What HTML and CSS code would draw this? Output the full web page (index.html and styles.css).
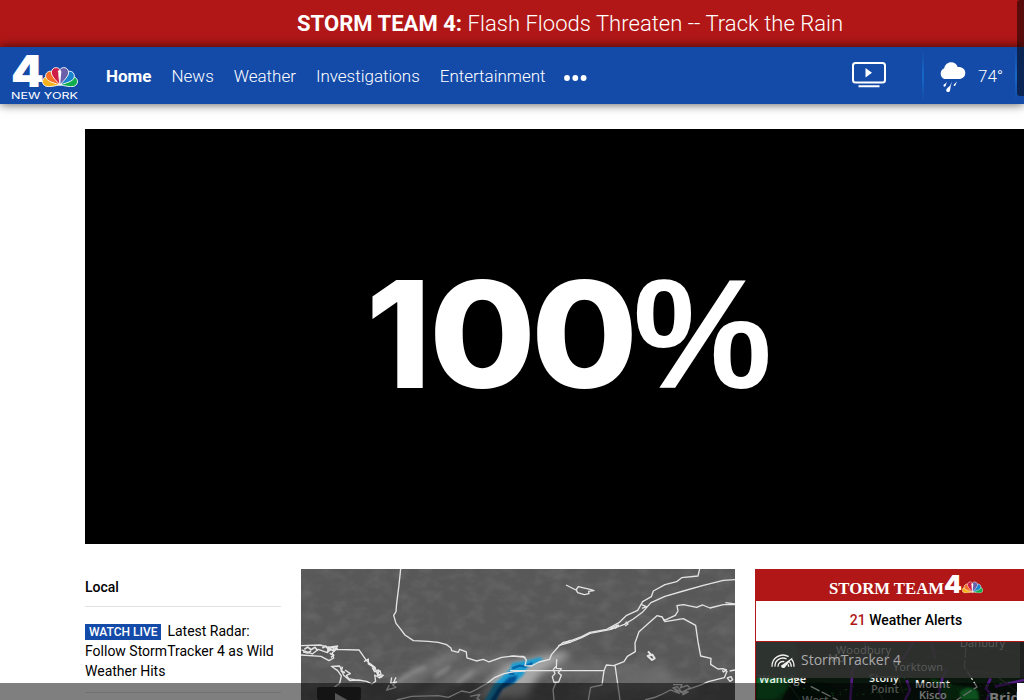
FILE: index.html
```html
<!DOCTYPE html>
<html lang="en">
<head>
<meta charset="utf-8">
<title>NBC New York</title>
<link rel="stylesheet" href="styles.css">
</head>
<body>
<svg class="defs" width="0" height="0" aria-hidden="true">
  <defs>
    <path id="feather" d="M0 0C-1.500-4-4.900-9-4.900-13C-4.700-16-2.400-18-.2-18C2.500-18 4.700-16 4.900-13C4.900-9 1.500-4 0 0Z"/>
    <symbol id="peacock" viewBox="0 0 36 21">
      <g transform="translate(18 19)" stroke="#fff" stroke-width=".8">
        <use href="#feather" fill="#f5b21b" transform="rotate(-75)"/>
        <use href="#feather" fill="#0fae4b" transform="rotate(75)"/>
        <use href="#feather" fill="#f36f25" transform="rotate(-47)"/>
        <use href="#feather" fill="#1983cc" transform="rotate(47)"/>
        <use href="#feather" fill="#ce1d46" transform="rotate(-17)"/>
        <use href="#feather" fill="#6c60aa" transform="rotate(17)"/>
        <path d="M0 1L-1.200-12L-2.400-14L0-15.300L1.400-13.500L1.200-12Z" fill="#fff" stroke="none"/>
      </g>
    </symbol>
  </defs>
</svg>
<a class="breaking"><b>STORM TEAM 4:</b> Flash Floods Threaten -- Track the Rain</a>
<header class="nav">
  <svg class="logo" width="68" height="46" viewBox="0 0 68 46">
    <text x="0" y="33" class="logo-four" textLength="33" lengthAdjust="spacingAndGlyphs">4</text>
    <use href="#peacock" x="31" y="12" width="36" height="21"/>
    <text x="0" y="45" class="logo-city" textLength="67" lengthAdjust="spacingAndGlyphs">NEW YORK</text>
  </svg>
  <nav class="links">
    <a class="active">Home</a><a>News</a><a>Weather</a><a>Investigations</a><a>Entertainment</a>
    <svg class="more" width="23" height="6" viewBox="0 0 23 6" fill="#fff"><circle cx="3" cy="3" r="2.900"/><circle cx="11.300" cy="3" r="2.900"/><circle cx="19.600" cy="3" r="2.900"/></svg>
  </nav>
  <svg class="tv" width="34" height="26" viewBox="0 0 34 26">
    <rect x="1" y="1" width="32" height="19.600" rx="2.500" fill="none" stroke="#fff" stroke-width="2"/>
    <path d="M13.500 6v9.600l6.500-4.800zM6.500 23.200h21v2h-21z" fill="#fff"/>
  </svg>
  <div class="weather">
    <svg width="28" height="31" viewBox="0 0 28 31" fill="#fff">
      <path d="M6.500 17A5.800 5.800 0 0 1 6.200 6.200C7 2.500 9.800.3 13.200.3c3 0 5.500 1.800 6.500 4.800C24.300 4.800 27.300 7.300 27.300 11c0 3.600-2.800 6-6.400 6z"/>
      <path d="M9 19.500C8 22 5.200 22 5.500 24c.3 1.200 2 1 2.200-.4zM14 19.500l-2 4.200c-2.600 2.300-4.300 3.300-3.700 5.200.6 1.600 3.500 1.600 3.800-.7l.6-4zM19 19.500l-2.800 2.800c-1.600 1.800 1 2.500 1.300.7z"/>
    </svg>
    <span>74°</span>
  </div>
</header>
<section class="hero">
  <svg width="939" height="415" viewBox="0 0 939 415">
    <g class="hero-num">
      <text x="281" y="259" textLength="65" lengthAdjust="spacingAndGlyphs">1</text>
      <text x="344" y="259" textLength="107" lengthAdjust="spacingAndGlyphs">0</text>
      <text x="446" y="259" textLength="107" lengthAdjust="spacingAndGlyphs">0</text>
      <text x="548" y="259" class="percent" textLength="139" lengthAdjust="spacingAndGlyphs">%</text>
    </g>
  </svg>
</section>
<main class="columns">
  <section class="local">
    <h2>Local</h2>
    <p><b class="tag">WATCH LIVE</b>Latest Radar: Follow StormTracker 4 as Wild Weather Hits</p>
  </section>
  <section class="satellite">
    <svg width="434" height="131" viewBox="0 0 434 131">
      <defs>
        <filter id="soft" x="-30%" y="-30%" width="160%" height="160%"><feGaussianBlur stdDeviation="12"/></filter>
        <filter id="softer" x="-30%" y="-60%" width="160%" height="220%"><feGaussianBlur stdDeviation="16"/></filter>
        <filter id="edge"><feGaussianBlur stdDeviation="3"/></filter>
        <filter id="haze" x="-20%" y="-20%" width="140%" height="140%"><feGaussianBlur stdDeviation="6"/></filter>
        <filter id="grain" x="0" y="0" width="100%" height="100%">
          <feTurbulence type="fractalNoise" baseFrequency=".06 .09" numOctaves="5" seed="4"/>
          <feColorMatrix values="0 0 0 0 .48  0 0 0 0 .48  0 0 0 0 .48  0 1.600 0 0 -.65"/>
        </filter>
      </defs>
      <rect width="434" height="131" fill="#585858"/>
      <rect width="434" height="131" filter="url(#grain)" opacity=".17"/>
      <g transform="translate(-6 -9) scale(.3333)" fill="none">
        <g filter="url(#softer)">
          <path d="M300 390Q410 310 500 275M360 430Q520 330 640 290" stroke="#858585" stroke-width="20"/>
          <path d="M720 330Q900 320 1130 345M850 400Q1000 360 1200 380" stroke="#787878" stroke-width="20"/>
        </g>
        <path d="M305 370Q345 335 392 322M420 350l45-30M485 370l50-35" stroke="#999" stroke-width="8" filter="url(#haze)"/>
        <path d="M540 420Q600 330 650 305L800 275L830 285L740 335L690 410Z" fill="#a9a9a9" filter="url(#soft)"/>
        <path d="M567 425L595 375L632 340L645 328L652 309L690 303L735 292L745 299L698 322L683 347L654 372L615 388L603 425Z" fill="#1c9bd0" filter="url(#edge)"/>
        <path d="M585 423L610 384L642 352L668 346L660 365L625 384L608 410L600 425Z" fill="#034e91" filter="url(#edge)"/>
        <path d="M652 325l22-8 16 3 22-11M640 340l18 2" stroke="#0565a8" stroke-width="7"/>
        <g stroke="#e4e4e4" stroke-width="4" stroke-linejoin="round">
          <path d="M317 27L312 75L305 130L303 155L296 166L303 190L315 205L330 225L355 242L400 244L430 247L455 254L468 264L470 272L490 277L494 268L514 276L516 294L544 303L565 298L582 306L620 292L655 288L692 292"/>
          <path d="M18 257L75 255L100 262L128 258L120 268L192 270L213 300L225 311L240 322L247 342L265 346L254 354L239 345L242 364L231 372L215 364L190 360L165 362L146 346L134 318L109 319L128 332L139 348L134 370L104 392L90 420M18 285L78 289L102 302L116 294L112 278L127 265L100 261L97 278L70 268L52 282L20 270M150 330L166 341L154 346L161 356L194 362M207 305l13-8 0 15 17 10 0 9M246 340l9-8 4 14M290 352l-3 18 18-4-12 9 10 7-28 8 8-15M303 352l-8 18"/>
          <path d="M28 268l10-7 10 8 12-7 8 10M24 275l14 4 10-6M82 264l10-6 8 10 14-8 4 12-12-3-9 8M104 280l12 6-8 6M142 320l-3 14 11 4M232 322l7 13 12-5-3 16 14 5" stroke-width="5"/>
          <path d="M305 420L350 409L430 407L460 412L500 393L525 398L545 388L559 380L577 370L600 352L627 341L657 335L692 333M525 409l30-6-9 13 9 4"/>
        </g>
      </g>
      <g transform="translate(209 -9) scale(.3333)" fill="none" stroke="#e4e4e4" stroke-width="4" stroke-linejoin="round">
        <path d="M0 289L40 289L49 300L45 317L65 318L87 306L119 298L125 283L147 258L160 247L183 242L215 230L240 217L290 208L327 188L350 166L383 151L398 125L424 110L430 93L465 74L500 65L515 53L564 48L569 27"/>
        <path d="M145 257L183 246L215 233L240 220L303 208L343 193L370 177L397 157L423 128L465 109L520 93L580 76L640 61L675 59M300 205L325 195L316 206M395 134L409 140L396 145M347 185L354 192L345 198M160 252L182 240"/>
        <path d="M168 75L198 90L205 80L243 89L252 92L236 94L237 101L223 104L203 98L198 88M0 332L282 332M140 298L139 325L154 326L145 338L154 346L146 366L132 367L127 350L135 341L130 329L137 320M139 365L129 389L132 420M235 420L242 382L276 375L282 332L289 315L311 317L342 305L352 289L376 275L375 249L387 215L441 167L457 171L462 182L496 166L504 153L501 137L520 134L560 142L578 135L600 144L640 134L675 134M460 176L465 185L520 176L557 196L564 245L572 288L603 295L602 313L624 327L639 326L651 334L643 353L595 365L575 374L530 390L520 402L502 380L489 384L508 400L481 390L452 405L438 411L405 420M315 315L330 420M639 327l10 2-8 7-4-5M646 128L675 132M652 354l8 10 8-5-5-9zM659 333l16-3M489 374l27 0-5 10 21-8 8 8-26 13-19-11M519 394l16 2-18 9"/>
        <path d="M414 274l9 10-10 4 13 12 8-5-7-11-8 3" stroke-width="6"/>
      </g>
      <rect x="16" y="118" width="44" height="13" rx="2" fill="#292929"/>
      <path d="M34 124l16 9H34z" fill="#aaa"/>
    </svg>
  </section>
  <aside class="storm">
    <div class="storm-head">
      <svg width="156" height="26" viewBox="0 0 156 26">
        <text x="0" y="21.500" class="storm-name" textLength="115" lengthAdjust="spacingAndGlyphs">STORM TEAM</text>
        <text x="115" y="21" class="storm-four" textLength="18" lengthAdjust="spacingAndGlyphs">4</text>
        <use href="#peacock" x="133" y="9" width="21" height="12.300"/>
      </svg>
    </div>
    <div class="alerts"><span>21</span> Weather Alerts</div>
    <div class="radar">
      <svg width="268" height="58" viewBox="0 0 268 58">
        <rect width="268" height="58" fill="#0a170c"/>
        <g transform="translate(-6 -7) scale(.3333)">
          <g filter="url(#edge)">
            <path d="M18 21H135L150 65L110 90L155 115L120 145L95 195H18Z" fill="#0b4a1a"/>
            <path d="M18 130H90L115 160L70 195H18Z" fill="#0a6020"/>
            <path d="M540 130L590 145L650 155L690 170L685 195H545L580 175Z" fill="#0a4217"/>
            <path d="M630 170L655 157L680 163L688 195H634Z" fill="#18a03a"/>
            <path d="M125 155L190 140L235 150L265 170L220 195H120Z" fill="#061409"/>
          </g>
          <g fill="none" stroke="#521c80" stroke-width="8">
            <path d="M344 21L350 45L325 75L307 110L301 195M490 21L460 70L420 75M590 100L577 130L567 175L580 195M470 135L480 165L465 195M722 130L708 160L720 175L710 195M555 70L545 25M735 155L822 135"/>
          </g>
          <g stroke="#414a36" stroke-width="2" fill="none"><path d="M18 90L90 130L122 155L150 195M210 21L265 80L350 110L400 195M370 21L430 75L500 90L560 50L640 70L740 38L822 65M440 110L460 175M640 105L730 115L800 170"/></g>
          <g stroke="#1c732c" stroke-width="3" stroke-dasharray="3 13 8 19"><path d="M100 150L280 180M230 190L320 150M320 180L490 160M585 140L630 165M690 155L785 140M695 182L790 175M420 140L500 120"/></g>
          <path d="M123 120L165 145M182 154L262 195M648 38L643 95L681 156L620 195" fill="none" stroke="#d2d4d0" stroke-width="4" stroke-dasharray="30 7"/>
        </g>
        <g class="places"><text x="3" y="41" textLength="47" lengthAdjust="spacingAndGlyphs">Wantage</text><text x="113" y="40">Stony</text><text x="115" y="51" class="mid">Point</text><text x="159" y="46">Mount</text><text x="163" y="57">Kisco</text><text x="46" y="62" class="mid">West</text><text x="233" y="61" class="large">Bridgeport</text></g>
        <path d="M0 0H264V36H0Z" fill="#303230" opacity=".93"/>
        <path d="M264 0H268V36H264Z" fill="#202020" opacity=".9"/>
        <g class="places dim"><text x="80" y="12" textLength="55">Woodbury</text><text x="72" y="20">Mo</text><text x="137" y="29" textLength="50">Yorktown</text><text x="204" y="5" textLength="45">Danbury</text></g>
        <g transform="translate(-6 -7) scale(.3333)" fill="none" stroke="#f1f1f1" stroke-width="4">
          <path d="M66 95A33 33 0 0 1 116 65M124 71A35 35 0 0 1 132 95M75 95A24 24 0 0 1 110 72M118 79Q124 87 124 95M84 95A15 15 0 0 1 103 80M114 88Q116 92 116 95"/>
          <path d="M95 91L129 67L104 98Q98 101 93 95Z" fill="#f1f1f1" stroke="none"/>
        </g>
        <text x="45" y="23" class="tracker" textLength="100">StormTracker 4</text>
      </svg>
    </div>
  </aside>
</main>
<div class="scroll-v"></div>
<div class="scroll-h"></div>
<div class="scroll-corner"></div>
</body>
</html>
```
FILE: styles.css
```css
* { box-sizing: border-box; }
html, body { width: 1024px; height: 700px; overflow: hidden; }
body { margin: 0; background: #fff; color: #000; font-family: Roboto, "Liberation Sans", sans-serif; }
svg { display: block; }
.defs { position: absolute; }
.breaking { display: block; height: 47px; padding-left: 297px; background: #b11716; color: #fff; font-size: 22px; letter-spacing: .035px; line-height: 47px; font-weight: 300; white-space: nowrap; }
.breaking b { font-weight: 700; }
.nav { position: relative; display: flex; align-items: center; height: 57px; background: #144ba9; color: #fff; box-shadow: 0 0 10px rgba(0,0,0,.7); }
.logo { margin: 0 27px 0 11px; align-self: flex-start; margin-top: 7px; overflow: visible; }
.logo-four { font: 900 44px Inter, sans-serif; fill: #fff; }
.logo-city { font: 400 9.500px Inter, sans-serif; fill: #fff; }
.links { display: flex; align-items: center; gap: 20px; font-size: 17px; letter-spacing: -.01px; font-weight: 300; line-height: 20px; padding-top: 1px; }
.links .active { font-weight: 700; }
.more { margin-top: 4px; margin-left: -1px; }
.tv { margin-left: auto; margin-right: 36px; margin-top: -2px; }
.weather { display: flex; align-items: center; width: 95px; height: 49px; padding-left: 15px; gap: 12px; border-left: 2px solid; border-right: 2px solid; border-image: linear-gradient(#144ba9, #1768c6 50%, #144ba9) 1; font-size: 17px; font-weight: 300; margin-right: 7px; }
.weather svg { flex: none; margin-top: 3px; margin-left: -1px; }
.hero { margin: 25px 0 0 85px; height: 415px; background: #000; }
.hero-num { font: 800 148px Inter, sans-serif; fill: #fff; }
.percent { font: 700 155px "Liberation Sans", sans-serif; }
.columns { display: grid; grid-template-columns: 196px 434px 269px; gap: 20px; margin: 25px 0 0 85px; }
.local h2 { margin: 0; height: 38px; padding-top: 8px; border-bottom: 1px solid #e2e2e2; font-size: 14px; line-height: 20px; font-weight: 500; }
.local p { margin: 14px 0 0; font-size: 14px; line-height: 20px; height: 72px; border-bottom: 1px solid #e2e2e2; }
.tag { display: inline-block; height: 16px; margin-right: 6px; padding: 0 4px; background: #144ba9; color: #fff; font-size: 12px; line-height: 16px; font-weight: 500; }
.storm { border-left: 1px solid #b11716; height: 131px; overflow: hidden; }
.storm-head { display: flex; justify-content: center; height: 32px; padding-top: 3px; padding-right: 0; padding-left: 33px; background: #b11716; }
.storm-name { font: 700 17px "Liberation Serif", serif; fill: #fff; }
.storm-four { font: 900 25px Inter, sans-serif; fill: #fff; }
.alerts { height: 41px; border-bottom: 1px solid #b11716; padding-left: 32px; line-height: 38px; text-align: center; font-size: 14px; font-weight: 500; }
.alerts span { color: #b11716; }
.places { font: 600 11px "Open Sans", sans-serif; fill: #eee; }
.places .large { font-size: 15px; font-weight: 700; }
.places .mid { fill: #a5a8a5; }
.dim { fill: #5a5c5a; font-weight: 400; }
.tracker { font: 400 14px "Open Sans", sans-serif; fill: #aaa; }
.scroll-v { position: fixed; z-index: 3; top: 0; right: 0; width: 7px; height: 96px; border-radius: 3px 0 0 3px; background: rgba(0,0,0,.5); }
.scroll-h { position: fixed; z-index: 3; left: 0; bottom: 0; width: 1017px; height: 17px; background: rgba(0,0,0,.5); }
.scroll-corner { position: fixed; z-index: 3; right: 0; bottom: 0; width: 7px; height: 17px; background: #fff; }
```
